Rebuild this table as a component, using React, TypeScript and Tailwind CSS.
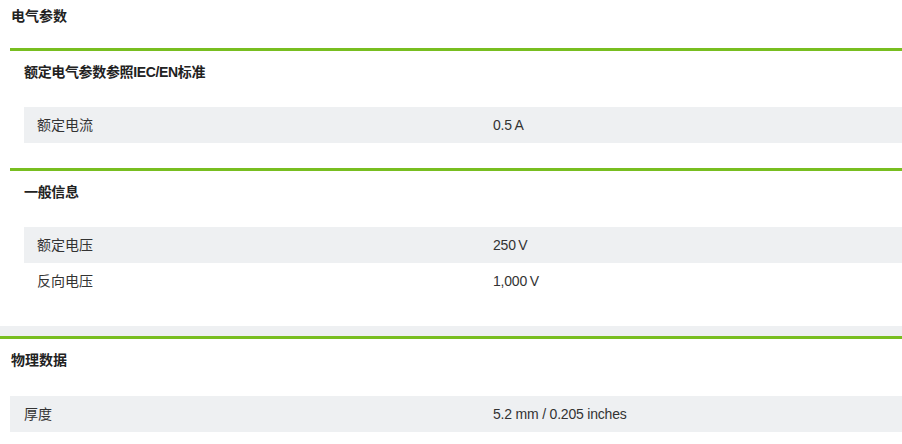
import React from 'react';

type Row = { label: string; value: string };

const electrical: { title: string; rows: Row[] }[] = [
  { title: '额定电气参数参照IEC/EN标准', rows: [{ label: '额定电流', value: '0.5\u202FA' }] },
  {
    title: '一般信息',
    rows: [
      { label: '额定电压', value: '250\u202FV' },
      { label: '反向电压', value: '1,000\u202FV' },
    ],
  },
];

const physical: Row[] = [{ label: '厚度', value: '5.2 mm / 0.205 inches' }];

const App: React.FC = () => {
  return (
    <div
      className="min-h-[444px] w-[902px] overflow-hidden bg-white text-[14px] leading-[20px] text-[#333]"
      style={{ fontFamily: '"Liberation Sans", "Noto Sans CJK SC", sans-serif' }}
    >
      <div className="h-12 pl-[11px] pt-[6px] font-bold text-[#222]">电气参数</div>

      <div className="pl-[10px]">
        {electrical.map((section, i) => (
          <section
            key={section.title}
            className={`border-t-[3px] border-[#78be20] pt-[11px] ${i === electrical.length - 1 ? 'pb-[27px]' : 'pb-[25px]'}`}
          >
            <h3 className="mb-[25px] pl-[14px] font-bold tracking-[-0.35px] text-[#222]">{section.title}</h3>
            <div className="pl-[14px]">
              {section.rows.map((row, j) => (
                <div key={row.label} className={`flex h-9 items-center ${j % 2 === 0 ? 'bg-[#eef0f2]' : 'bg-white'}`}>
                  <div className="w-[469px] shrink-0 pl-[13px]">{row.label}</div>
                  <div className="tracking-[-0.2px]">{row.value}</div>
                </div>
              ))}
            </div>
          </section>
        ))}
      </div>

      <div className="h-[10px] bg-[#eef0f2]" />

      <section className="border-t-[3px] border-[#78be20] pt-[11px]">
        <h3 className="mb-[26px] pl-[11px] font-bold text-[#222]">物理数据</h3>
        <div className="pl-[10px]">
          {physical.map((row) => (
            <div key={row.label} className="flex h-9 items-center bg-[#eef0f2]">
              <div className="w-[483px] shrink-0 pl-[14px]">{row.label}</div>
              <div className="tracking-[-0.2px]">{row.value}</div>
            </div>
          ))}
        </div>
      </section>
    </div>
  );
};

export default App;
